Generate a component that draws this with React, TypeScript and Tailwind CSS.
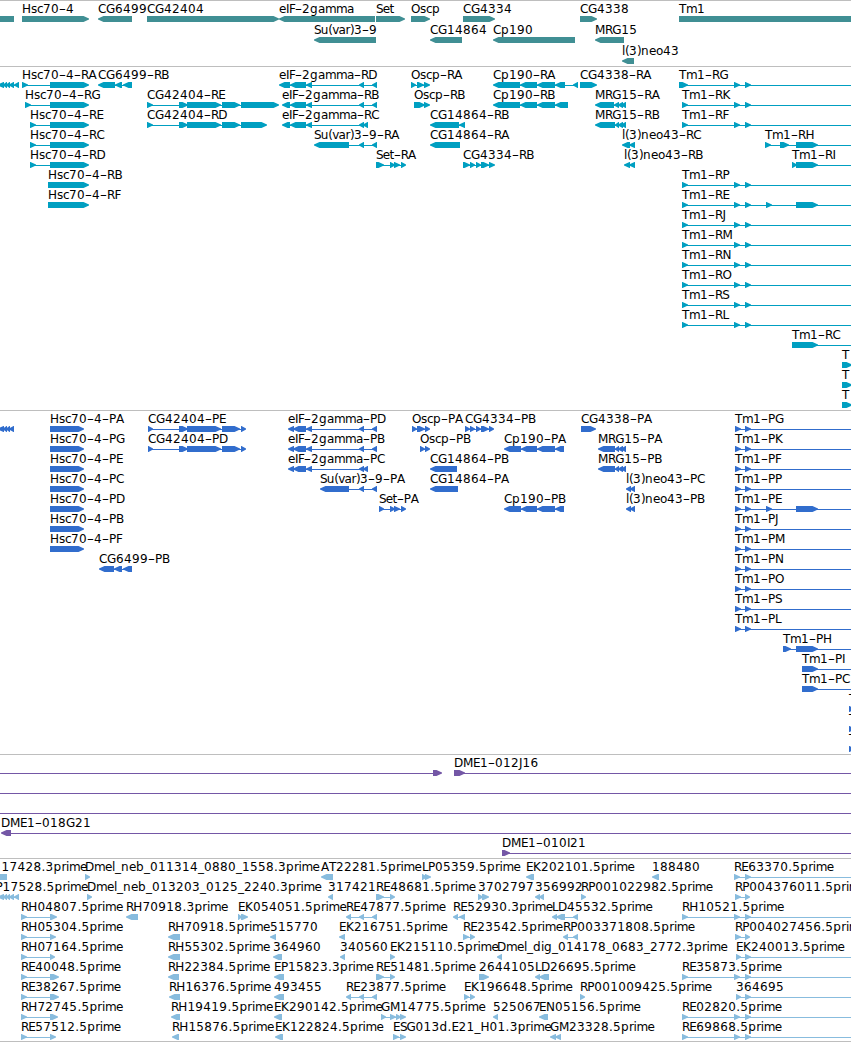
interface Feature {
  name: string
  // 1 points right, -1 points left, 0 has no arrow head
  dir: 1 | -1 | 0
  exons: [number, number][]
  // the connector runs on to the edge of the view
  open: boolean
  labelX: number
}

interface Track {
  id: string
  color: string
  rowHeight: string
  className: string
  rows: Feature[][]
}

const VIEW_WIDTH = 851

// Short form: "name dir start~end,start~end,..." with an optional "+" (open) and "@x" (label position)
const parse = (line: string): Feature => {
  const [name, dir, spans, ...flags] = line.split(' ')
  const exons = spans.split(',').map(s => s.split('~').map(Number) as [number, number])
  const at = flags.find(f => f.startsWith('@'))
  return {
    name: name === '.' ? '' : name,
    dir: dir === '>' ? 1 : dir === '<' ? -1 : 0,
    exons,
    open: flags.includes('+'),
    labelX: at ? Number(at.slice(1)) : exons[0][0],
  }
}

const rows = (data: string): Feature[][] =>
  data
    .trim()
    .split('\n')
    .map(row => row.split(';').map(s => s.trim()).filter(Boolean).map(parse))

const genes = rows(`
. | 0~14; Hsc70-4 > 22~89; CG6499 < 98~132; CG42404 > 147~279; eIF-2gamma < 279~375; Set > 376~405; Oscp > 411~430; CG4334 > 463~495; CG4338 > 580~597; Tm1 > 679~870
Su(var)3-9 < 314~376; CG14864 < 430~462; Cp190 < 493~575; MRG15 < 595~624
l(3)neo43 < 622~634
`)

const transcripts = rows(`
. < -2~4,3~7,6~10,9~14,14~19; Hsc70-4-RA > 22~28,50~89; CG6499-RB < 98~115,115~122,123~132; eIF-2gamma-RD < 279~290,290~306,306~312,359~364,372~377; Oscp-RA > 411~416,417~424,424~430; Cp190-RA < 493~520,520~537,537~555,555~565,573~578; CG4338-RA > 580~597; Tm1-RG > 679~688,734~740,745~751 +
Hsc70-4-RG > 25~31,50~89; CG42404-RE > 147~153,179~188,187~221,222~240,241~279; eIF-2gamma-RB < 282~290,290~306,306~312,359~364,372~377; Oscp-RB > 414~425,424~430; Cp190-RB < 493~520,520~537,537~555,555~568; MRG15-RA < 595~614,614~619,618~623,621~626; Tm1-RK > 682~688,734~740,745~751 +
Hsc70-4-RE > 30~36,50~89; CG42404-RD > 147~153,179~188,187~221,222~240,241~267; eIF-2gamma-RC < 282~290,290~306,306~312,359~364,363~368; CG14864-RB < 430~459,459~465; MRG15-RB < 595~615,615~619,618~623,621~626; Tm1-RF > 682~688,734~740,745~751 +
Hsc70-4-RC > 30~36,50~89; Su(var)3-9-RA < 314~349,359~364,372~377; CG14864-RA < 430~460; l(3)neo43-RC < 622~630,629~635; Tm1-RH > 765~771,780~789,796~818 +
Hsc70-4-RD > 30~36,50~89; Set-RA > 376~384,390~395,394~400,401~406; CG4334-RB > 463~470,470~475,476~481,481~489,489~495; l(3)neo43-RB < 624~630,629~635; Tm1-RI > 792~797,796~818 +
Hsc70-4-RB > 48~89; Tm1-RP > 682~688,734~740,745~751 +
Hsc70-4-RF > 48~89; Tm1-RE > 682~688,734~740,745~751,766~772,796~818 +
Tm1-RJ > 682~688,734~740,745~751 +
Tm1-RM > 682~688,734~740,745~751 +
Tm1-RN > 682~688,734~740,745~751 +
Tm1-RO > 682~688,734~740,745~751 +
Tm1-RS > 682~688,734~740,745~751 +
Tm1-RL > 682~688,734~740,745~751 +
Tm1-RC > 792~818 +
T > 842~852
T > 842~852
T > 842~852
`)

const proteins = rows(`
. < -2~4,3~7,6~10,9~14; Hsc70-4-PA > 50~84; CG42404-PE > 148~153,179~188,187~221,222~240,241~246; eIF-2gamma-PD < 288~294,293~306,306~312,359~364,372~377; Oscp-PA > 412~417,417~425,425~430; CG4334-PB > 465~470,470~475,476~481,481~489,489~494; CG4338-PA > 581~596; Tm1-PG > 735~741,745~751 +
Hsc70-4-PG > 50~84; CG42404-PD > 148~153,179~188,187~221,222~240,241~246; eIF-2gamma-PB < 288~294,293~306,306~312,359~364,372~377; Oscp-PB > 420~425,425~430; Cp190-PA < 504~521,521~537,537~555,555~564; MRG15-PA < 598~615,615~619,618~623,621~626; Tm1-PK > 735~741,745~751 +
Hsc70-4-PE > 50~84; eIF-2gamma-PC < 288~294,293~306,306~312,359~364,363~368; CG14864-PB < 430~457; MRG15-PB < 598~615,615~619,618~623,621~626; Tm1-PF > 735~741,745~751 +
Hsc70-4-PC > 50~84; Su(var)3-9-PA < 320~349,359~364,372~377; CG14864-PA < 430~458; l(3)neo43-PC < 626~631,630~635; Tm1-PP > 735~741,745~751 +
Hsc70-4-PD > 50~84; Set-PA > 379~384,390~395,394~400,401~406; Cp190-PB < 504~521,521~537,537~555,555~564; l(3)neo43-PB < 626~631,630~635; Tm1-PE > 735~741,745~751,766~772,796~818 +
Hsc70-4-PB > 50~84; Tm1-PJ > 735~741,745~751 +
Hsc70-4-PF > 50~84; Tm1-PM > 735~741,745~751 +
CG6499-PB < 99~114,114~122,123~132; Tm1-PN > 735~741,745~751 +
Tm1-PO > 735~741,745~751 +
Tm1-PS > 735~741,745~751 +
Tm1-PL > 735~741,745~751 +
Tm1-PH > 783~791,796~818 +
Tm1-PI > 802~818 +
Tm1-PC > 802~818 +
T > 849~855
T > 849~855
T > 849~855
`)

const bacs = rows(`
. > -5~-1,433~442; DME1-012J16 > 454~465 +
. > -5~-1 +
. > -5~-1 +
DME1-018G21 < 1~11 +
DME1-010I21 > 502~510 +
`)

const ests = rows(`
17428.3prime | 0~7 @1.5; Dmel_neb_011314_0880_1558.3prime > 85~90; AT22281.5prime < 321~333; LP05359.5prime > 422~427,425~431; EK202101.5prime < 526~534; 188480 < 652~659; RE63370.5prime > 734~740,745~751 +
P17528.5prime < -2~4,3~7,6~10,9~14,14~19 @-4.5; Dmel_neb_013203_0125_2240.3prime > 87~92; 317421 < 328~333; RE48681.5prime > 376~384,390~395; 3702797 > 478~483,482~489; 356992 < 535~540,539~544; RP001022982.5prime > 581~586; RP004376011.5prime > 735~741,745~750
RH04807.5prime > 21~27,50~57; RH70918.3prime < 126~138; EK054051.5prime > 238~242,241~248; RE47877.5prime < 346~351,359~364,372~377; RE52930.3prime < 453~458,459~465; LD45532.5prime < 552~557,556~565,573~578; RH10521.5prime > 682~688,734~740,745~751 +
RH05304.5prime > 21~27,50~56; RH70918.5prime < 168~180; 515770 < 270~276; EK216751.5prime < 339~345; RE23542.5prime > 463~469,470~475; RP003371808.5prime < 563~568,573~578; RP004027456.5prime > 735~741,745~750
RH07164.5prime > 21~27,50~55; RH55302.5prime < 168~180; 364960 < 273~282; 340560 < 340~345; EK215110.5prime > 390~395; Dmel_dig_014178_0683_2772.3prime < 497~502; EK240013.5prime > 736~741,745~751 +
RE40048.5prime > 21~27,50~59; RH22384.5prime < 168~179; EP15823.3prime < 274~284; RE51481.5prime > 376~384,390~395; 2644105 > 479~489; LD26695.5prime < 535~540,539~549; RE35873.5prime > 682~688,734~740,745~751 +
RE38267.5prime > 21~27,50~59; RH16376.5prime < 169~180; 493455 < 274~284; RE23877.5prime < 346~351,359~364,372~377; EK196648.5prime > 464~469,470~475; RP001009425.5prime > 580~585; 364695 > 736~741,745~751 +
RH72745.5prime > 21~27,50~58; RH19419.5prime < 171~180; EK290142.5prime < 274~282; GM14775.5prime > 381~386,390~396,396~401,400~406; 525067 < 493~498; EN05156.5prime < 539~548; RE02820.5prime > 682~688,734~740,745~751 +
RE57512.5prime > 21~27,50~56; RH15876.5prime < 172~179; EK122824.5prime < 275~283; ESG013d.E21_H01.3prime > 393~399,400~406; GM23328.5prime < 550~556,555~561; RE69868.5prime > 682~688,734~740,745~751 +
`)

const tracks: Track[] = [
  { id: 'genes', color: '#408f94', rowHeight: 'h-[21px]', className: 'pt-px pb-px', rows: genes },
  { id: 'transcripts', color: '#009fc1', rowHeight: 'h-5', className: 'pt-px pb-0.5', rows: transcripts },
  { id: 'proteins', color: '#316dcd', rowHeight: 'h-5', className: 'pt-px pb-0.5', rows: proteins },
  { id: 'bacs', color: '#7457a6', rowHeight: 'h-5', className: 'pt-px pb-0.5', rows: bacs },
  { id: 'ests', color: '#88bcde', rowHeight: 'h-5', className: 'pt-px pb-px', rows: ests },
]

// Outline of one exon, 6px high, with its blunt head on the side the feature points to
const exonPath = ([start, end]: [number, number], dir: number) => {
  const head = Math.min(6, end - start)
  if (dir > 0) return `M${start} 14H${end - head + 0.5}L${end} 16.5V17.5L${end - head + 0.5} 20H${start}Z`
  if (dir < 0) return `M${end} 14H${start + head - 0.5}L${start} 16.5V17.5L${start + head - 0.5} 20H${end}Z`
  return `M${start} 14H${end}V20H${start}Z`
}

function FeatureGlyph({ feature, color }: { feature: Feature; color: string }) {
  const first = feature.exons[0][0]
  const last = feature.open ? VIEW_WIDTH : feature.exons[feature.exons.length - 1][1]
  const spliced = feature.open || feature.exons.length > 1

  return (
    <g fill={color}>
      {spliced && <rect x={first + 1} y={17} width={last - first - 2 + (feature.open ? 2 : 0)} height={1} />}
      {feature.exons.map((exon, i) => (
        <path key={i} d={exonPath(exon, feature.dir)} />
      ))}
    </g>
  )
}

// Letter spacing (px) that brings the glyphs close to whole-pixel advances
const TRACKING: Record<string, number> = {
  A: -0.2, B: -1.2, C: -0.4, D: -0.25, E: -0.6, F: -0.9, G: -0.3, I: -0.55, K: 0.1, L: -0.7, M: -0.4,
  O: -0.45, P: -0.25, R: -1, S: -1, T: -0.3,
  a: -0.35, b: 0.35, c: -0.6, d: 0.35, e: -0.4, g: 0.35, i: -0.35, l: -0.35, m: -0.7, n: 0.35, o: -0.35,
  p: 0.35, r: -0.4, s: -0.25, t: -0.7, u: 0.1, v: -1,
  '(': -0.7, ')': -0.7, '.': 0.2,
}

const trackingOf = (char: string) => (/\d/.test(char) ? 0.365 : TRACKING[char] ?? 0)

// Splits a name into runs of equal tracking, each hyphen on its own
const toRuns = (name: string) => {
  const runs: { text: string; tracking: number }[] = []
  for (const char of name) {
    const prev = runs[runs.length - 1]
    const tracking = trackingOf(char)
    if (prev && char !== '-' && prev.text !== '-' && prev.tracking === tracking) prev.text += char
    else runs.push({ text: char, tracking })
  }
  return runs
}

function FeatureLabel({ feature }: { feature: Feature }) {
  return (
    <span
      className="absolute top-0 text-[12px] leading-[14px] whitespace-pre text-black [font-kerning:none]"
      style={{ left: feature.labelX }}
    >
      {toRuns(feature.name).map((run, i) =>
        run.text === '-' ? (
          <span key={i} className="inline-block w-[7px] scale-x-[1.7] text-center">-</span>
        ) : (
          <span key={i} style={{ letterSpacing: run.tracking }}>{run.text}</span>
        )
      )}
    </span>
  )
}

function TrackRow({ features, color, height }: { features: Feature[]; color: string; height: string }) {
  return (
    <div className={`relative ${height}`}>
      <svg className="block h-5 w-full">
        {features.map((f, i) => (
          <FeatureGlyph key={i} feature={f} color={color} />
        ))}
      </svg>
      {features.filter(f => f.name).map((f, i) => (
        <FeatureLabel key={i} feature={f} />
      ))}
    </div>
  )
}

export default function App() {
  return (
    <main className="h-[1042px] w-[851px] overflow-hidden border-b border-[#bebebe] bg-white font-['DejaVu_Sans',sans-serif]">
      {tracks.map(track => (
        <section key={track.id} className={`border-t border-[#bebebe] ${track.className}`}>
          {track.rows.map((features, i) => (
            <TrackRow key={i} features={features} color={track.color} height={track.rowHeight} />
          ))}
        </section>
      ))}
    </main>
  )
}
